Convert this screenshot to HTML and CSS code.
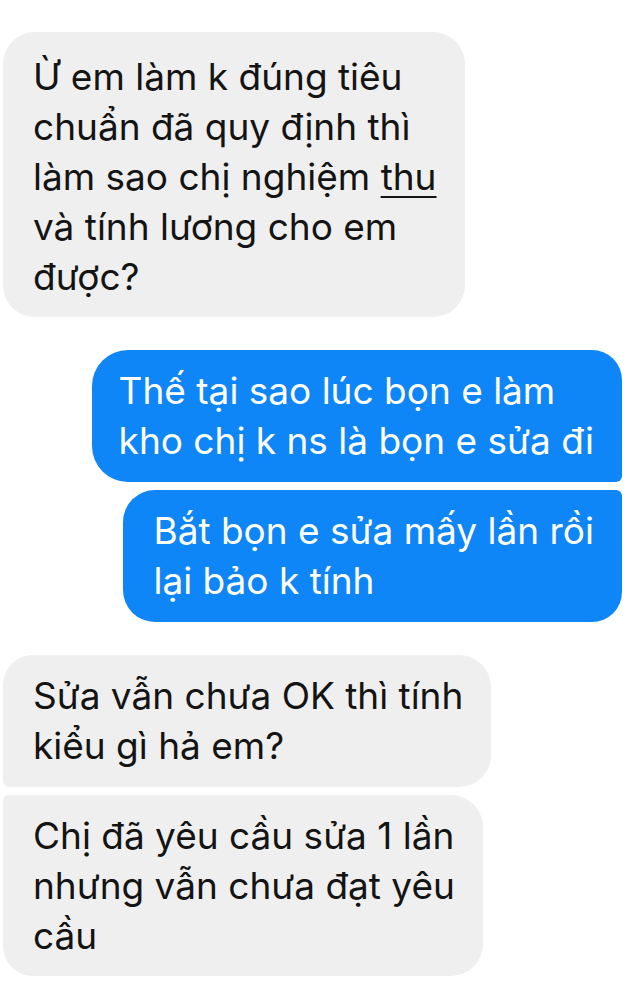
FILE: index.html
```html
<!DOCTYPE html>
<html lang="vi">
<head>
<meta charset="utf-8">
<title>Chat</title>
<link rel="stylesheet" href="styles.css">
</head>
<body>
<main class="thread">
  <div class="bubble in solo">Ừ em làm k đúng tiêu<br>chuẩn đã quy định thì<br>làm sao chị nghiệm <span class="link">thu</span><br>và tính lương cho em<br>được?</div>

  <div class="group out-group">
    <div class="bubble out first">Thế tại sao lúc bọn e làm<br>kho chị k ns là bọn e sửa đi</div>
    <div class="bubble out last">Bắt bọn e sửa mấy lần rồi<br>lại bảo k tính</div>
  </div>

  <div class="group in-group">
    <div class="bubble in first">Sửa vẫn chưa OK thì tính<br>kiểu gì hả em?</div>
    <div class="bubble in last">Chị đã yêu cầu sửa 1 lần<br>nhưng vẫn chưa đạt yêu<br>cầu</div>
  </div>
</main>
</body>
</html>
```

FILE: styles.css
```css
html, body {
  margin: 0;
  padding: 0;
  background: #ffffff;
}

.thread {
  width: 640px;
  height: 993px;
  overflow: hidden;
  display: flex;
  flex-direction: column;
  gap: 33px;
  padding-top: 32px;
  box-sizing: border-box;
  font-family: Inter, "Noto Sans", "Liberation Sans", sans-serif;
  font-size: 37px;
  line-height: 50px;
}

.group {
  display: flex;
  flex-direction: column;
  gap: 8px;
}

.out-group {
  align-items: flex-end;
  padding-right: 18px;
}

.in-group {
  align-items: flex-start;
  padding-left: 3px;
}

.bubble {
  width: fit-content;
  white-space: nowrap;
  padding: 16px 28px 16px 30px;
  border-radius: 32px;
}

.bubble.in {
  background: #efefef;
  color: #141414;
}

.bubble.solo {
  margin-left: 3px;
  padding-top: 20px;
  padding-bottom: 15px;
}

.bubble.out {
  background: #0f86f8;
  color: #ffffff;
}

.bubble.out.first {
  padding-left: 27px;
  border-radius: 36px 30px 6px 36px;
}

.bubble.out.last {
  border-radius: 32px 6px 30px 32px;
}

.bubble.in.first {
  border-radius: 30px 32px 32px 6px;
}

.bubble.in.last {
  border-radius: 6px 32px 32px 30px;
  padding-bottom: 15px;
}

.link {
  text-decoration: underline;
  text-decoration-thickness: 2px;
  text-underline-offset: 6px;
}
```
